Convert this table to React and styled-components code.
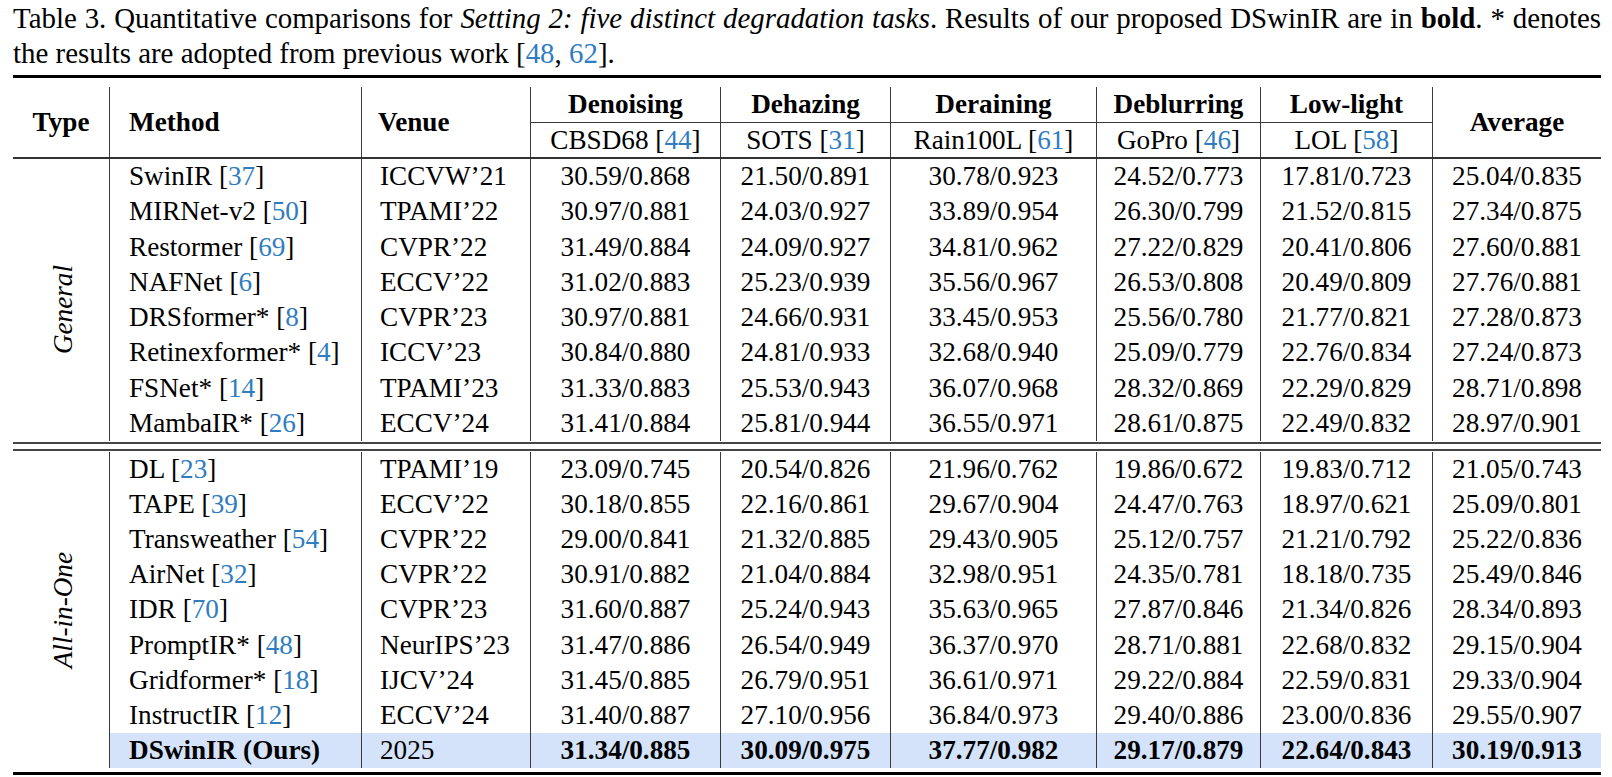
import React from 'react';
import styled, { createGlobalStyle } from 'styled-components';

const COLS = '96px 252px 169px 190px 170px 206px 164px 172px 169px';
const LINK = '#2f7cc0';

const tasks = [
  ['Denoising', 'CBSD68', '44'],
  ['Dehazing', 'SOTS', '31'],
  ['Deraining', 'Rain100L', '61'],
  ['Deblurring', 'GoPro', '46'],
  ['Low-light', 'LOL', '58'],
];

const general = [
  ['SwinIR', '37', 'ICCVW’21', ['30.59/0.868', '21.50/0.891', '30.78/0.923', '24.52/0.773', '17.81/0.723', '25.04/0.835']],
  ['MIRNet-v2', '50', 'TPAMI’22', ['30.97/0.881', '24.03/0.927', '33.89/0.954', '26.30/0.799', '21.52/0.815', '27.34/0.875']],
  ['Restormer', '69', 'CVPR’22', ['31.49/0.884', '24.09/0.927', '34.81/0.962', '27.22/0.829', '20.41/0.806', '27.60/0.881']],
  ['NAFNet', '6', 'ECCV’22', ['31.02/0.883', '25.23/0.939', '35.56/0.967', '26.53/0.808', '20.49/0.809', '27.76/0.881']],
  ['DRSformer*', '8', 'CVPR’23', ['30.97/0.881', '24.66/0.931', '33.45/0.953', '25.56/0.780', '21.77/0.821', '27.28/0.873']],
  ['Retinexformer*', '4', 'ICCV’23', ['30.84/0.880', '24.81/0.933', '32.68/0.940', '25.09/0.779', '22.76/0.834', '27.24/0.873']],
  ['FSNet*', '14', 'TPAMI’23', ['31.33/0.883', '25.53/0.943', '36.07/0.968', '28.32/0.869', '22.29/0.829', '28.71/0.898']],
  ['MambaIR*', '26', 'ECCV’24', ['31.41/0.884', '25.81/0.944', '36.55/0.971', '28.61/0.875', '22.49/0.832', '28.97/0.901']],
];

const allInOne = [
  ['DL', '23', 'TPAMI’19', ['23.09/0.745', '20.54/0.826', '21.96/0.762', '19.86/0.672', '19.83/0.712', '21.05/0.743']],
  ['TAPE', '39', 'ECCV’22', ['30.18/0.855', '22.16/0.861', '29.67/0.904', '24.47/0.763', '18.97/0.621', '25.09/0.801']],
  ['Transweather', '54', 'CVPR’22', ['29.00/0.841', '21.32/0.885', '29.43/0.905', '25.12/0.757', '21.21/0.792', '25.22/0.836']],
  ['AirNet', '32', 'CVPR’22', ['30.91/0.882', '21.04/0.884', '32.98/0.951', '24.35/0.781', '18.18/0.735', '25.49/0.846']],
  ['IDR', '70', 'CVPR’23', ['31.60/0.887', '25.24/0.943', '35.63/0.965', '27.87/0.846', '21.34/0.826', '28.34/0.893']],
  ['PromptIR*', '48', 'NeurIPS’23', ['31.47/0.886', '26.54/0.949', '36.37/0.970', '28.71/0.881', '22.68/0.832', '29.15/0.904']],
  ['Gridformer*', '18', 'IJCV’24', ['31.45/0.885', '26.79/0.951', '36.61/0.971', '29.22/0.884', '22.59/0.831', '29.33/0.904']],
  ['InstructIR', '12', 'ECCV’24', ['31.40/0.887', '27.10/0.956', '36.84/0.973', '29.40/0.886', '23.00/0.836', '29.55/0.907']],
];

const ours = ['DSwinIR (Ours)', '2025', ['31.34/0.885', '30.09/0.975', '37.77/0.982', '29.17/0.879', '22.64/0.843', '30.19/0.913']];

const GlobalStyle = createGlobalStyle`
  body {
    margin: 0;
    background: #fff;
    color: #000;
    font-family: "Liberation Serif", "Times New Roman", serif;
  }
`;

const Page = styled.div`
  width: 1588px;
  padding: 1px 0 0 13px;
`;

const Caption = styled.div`
  font-size: 28.9px;
  line-height: 35px;
`;

const CaptionLine = styled.div`
  white-space: nowrap;
  text-align: ${p => (p.$justify ? 'justify' : 'left')};
  text-align-last: ${p => (p.$justify ? 'justify' : 'left')};
  word-spacing: ${p => (p.$justify ? '-3px' : 'normal')};
`;

const Rule = styled.div`
  height: ${p => p.$h}px;
  background: ${p => p.$color || '#000'};
  margin-top: ${p => p.$mt || 0}px;
`;

const Grid = styled.div`
  display: grid;
  grid-template-columns: ${COLS};
  grid-template-rows: ${p => p.$rows};
  font-size: 27.2px;
  margin-top: ${p => p.$mt || 0}px;
`;

const Cell = styled.div`
  display: flex;
  align-items: center;
  justify-content: ${p => (p.$left ? 'flex-start' : 'center')};
  padding-left: ${p => (p.$left ? p.$pad || 19 : 0)}px;
  border-left: 1px solid #3a3a3a;
  font-weight: ${p => (p.$bold ? 700 : 400)};
  background: ${p => (p.$hl ? '#d4e3fa' : 'transparent')};
  white-space: nowrap;
  ${p => p.$span && 'grid-row: span 2;'}
  ${p => p.$under && 'border-bottom: 1px solid #3a3a3a;'}
`;

const TypeCell = styled.div`
  grid-row: 1 / span ${p => p.$n};
  display: flex;
  align-items: center;
  justify-content: center;
  font-weight: ${p => (p.$bold ? 700 : 400)};
  padding-top: ${p => p.$shift || 0}px;
  padding-left: ${p => (p.$side ? 4 : 0)}px;
`;

const SideLabel = styled.span`
  writing-mode: vertical-rl;
  transform: rotate(180deg);
  font-style: italic;
`;

const Ref = styled.span`
  color: ${LINK};
`;

const Cite = ({ n }) => (
  <>
    {' ['}
    <Ref>{n}</Ref>]
  </>
);

const Group = ({ label, rows, rowH, extra, shift }) => {
  const n = rows.length + (extra ? 1 : 0);
  return (
    <Grid $rows={`repeat(${n}, ${rowH}px)`}>
      <TypeCell $n={n} $shift={shift} $side>
        <SideLabel>{label}</SideLabel>
      </TypeCell>
      {rows.map(([name, ref, venue, vals]) => (
        <React.Fragment key={name}>
          <Cell $left>
            {name}
            <Cite n={ref} />
          </Cell>
          <Cell $left $pad={18}>{venue}</Cell>
          {vals.map((v, i) => (
            <Cell key={i}>{v}</Cell>
          ))}
        </React.Fragment>
      ))}
      {extra && (
        <>
          <Cell $left $bold $hl>
            {extra[0]}
          </Cell>
          <Cell $left $pad={18} $hl>
            {extra[1]}
          </Cell>
          {extra[2].map((v, i) => (
            <Cell key={i} $bold $hl>
              {v}
            </Cell>
          ))}
        </>
      )}
    </Grid>
  );
};

const App = () => (
  <>
    <GlobalStyle />
    <Page>
      <Caption>
        <CaptionLine $justify>
          Table 3. Quantitative comparisons for <i>Setting 2: five distinct degradation tasks</i>. Results of our
          proposed DSwinIR are in <b>bold</b>. * denotes
        </CaptionLine>
        <CaptionLine>
          the results are adopted from previous work [<Ref>48</Ref>, <Ref>62</Ref>].
        </CaptionLine>
      </Caption>

      <Rule $h={3} $mt={4} />

      <Grid $rows="36px 34px" $mt={9}>
        <TypeCell $n={2} $bold>
          Type
        </TypeCell>
        <Cell $span $left $bold>
          Method
        </Cell>
        <Cell $span $left $pad={16} $bold>
          Venue
        </Cell>
        {tasks.map(([t]) => (
          <Cell key={t} $bold $under>
            {t}
          </Cell>
        ))}
        <Cell $span $bold>
          Average
        </Cell>
        {tasks.map(([t, d, r]) => (
          <Cell key={d}>
            {d}
            <Cite n={r} />
          </Cell>
        ))}
      </Grid>

      <Rule $h={2} $color="#333" />

      <Group label="General" rows={general} rowH={35.25} shift={20} />

      <Rule $h={2} $mt={1} $color="#444" />
      <Rule $h={2} $mt={5} $color="#444" />

      <Grid $rows="1px" />
      <Group label="All-in-One" rows={allInOne} rowH={35.1} extra={ours} />

      <Rule $h={3} $mt={4} />
    </Page>
  </>
);

export default App;
